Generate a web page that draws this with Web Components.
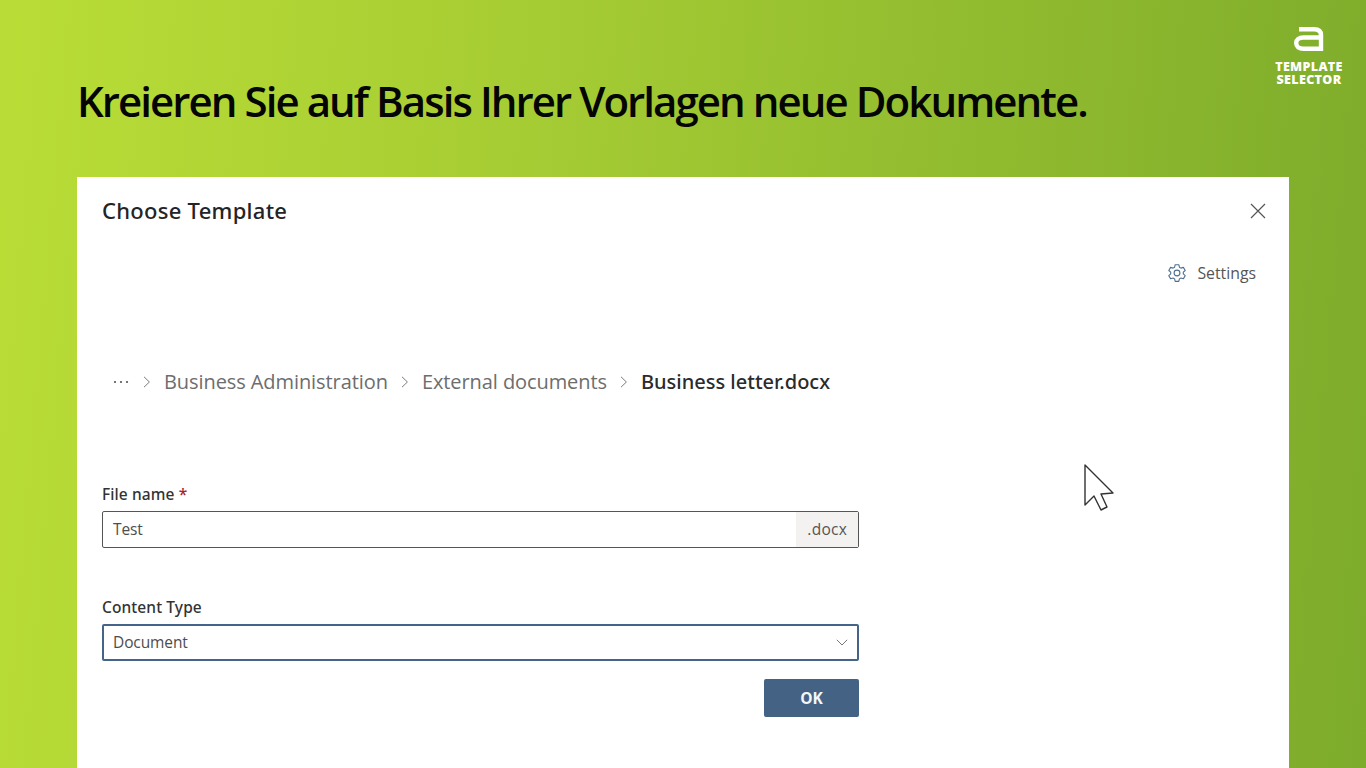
<!DOCTYPE html>
<html lang="de">
<head>
<meta charset="utf-8">
<title>Template Selector</title>
<style>
html, body { margin: 0; height: 100%; overflow: hidden; }
body { width: 1366px; height: 768px; background: linear-gradient(95deg, #badd36 0%, #a4cb33 40%, #7dab2b 100%); font-family: "Open Sans", sans-serif; }
</style>
</head>
<body>
<slide-page>
  <span slot="title">Kreieren Sie auf Basis Ihrer Vorlagen neue Dokumente.</span>
  <choose-dialog slot="dialog"></choose-dialog>
</slide-page>

<script>
class BrandLogo extends HTMLElement {
    constructor() {
        super();
        this.attachShadow({ mode: "open" });
        this.shadowRoot.innerHTML = `
<style>
:host { display: flex; flex-direction: column; align-items: center; width: 70px; color: #fff; font: 800 12.5px/13px "Open Sans", sans-serif; text-align: center; letter-spacing: .35px; }
svg { display: block; margin-bottom: 9px; }
</style>
<svg width="30" height="25" viewBox="0 0 30 25" fill="none" stroke="#fff" stroke-width="4.4">
  <path d="M5 3.2H20C25 3.2 27 5.5 27 9V22.8H9.5C4.8 22.8 2.2 20.5 2.2 17C2.2 13.5 4.8 11.5 9.5 11.5H27"/>
</svg>
<div>TEMPLATE</div>
<div>SELECTOR</div>`;
    }
}
customElements.define("brand-logo", BrandLogo);

class SlidePage extends HTMLElement {
    constructor() {
        super();
        this.attachShadow({ mode: "open" });
        this.shadowRoot.innerHTML = `
<style>
:host { display: flex; flex-direction: column; width: 1366px; height: 768px; overflow: hidden; }
header { display: flex; justify-content: space-between; align-items: flex-start; height: 177px; box-sizing: border-box; padding: 26px 22px 0 77px; }
h1 { margin: 47px 0 0; font: 600 42px/56px "Open Sans", sans-serif; letter-spacing: -1.94px; color: #050505; white-space: nowrap; }
main { flex: 1; padding: 0 77px; min-height: 0; }
</style>
<header>
  <h1><slot name="title"></slot></h1>
  <brand-logo></brand-logo>
</header>
<main><slot name="dialog"></slot></main>`;
    }
}
customElements.define("slide-page", SlidePage);

class CrumbTrail extends HTMLElement {
    constructor() {
        super();
        this.attachShadow({ mode: "open" });
        const chev = `<svg class="chev" width="8" height="12" viewBox="0 0 8 12" fill="none" stroke="#7a7a7a" stroke-width="1"><path d="M1 .8 6.4 6 1 11.2"/></svg>`;
        this.shadowRoot.innerHTML = `
<style>
:host { display: flex; align-items: center; height: 30px; padding-left: 11px; font: 400 20px/30px "Open Sans", sans-serif; letter-spacing: -.08px; color: #6d6d6d; white-space: nowrap; }
.dots { width: 17px; height: 4px; margin-right: 13px; }
.chev { margin-right: 13px; }
.part { margin-right: 13px; }
.last { color: #2b2b2b; font: 500 20px/30px "Noto Sans", sans-serif; letter-spacing: 0; }
</style>
<svg class="dots" viewBox="0 0 17 4" fill="#555"><circle cx="2" cy="2" r="1.1"/><circle cx="8" cy="2" r="1.1"/><circle cx="14" cy="2" r="1.1"/></svg>
${chev}<span class="part">Business Administration</span>
${chev}<span class="part">External documents</span>
${chev}<span class="last">Business letter.docx</span>`;
    }
}
customElements.define("crumb-trail", CrumbTrail);

class FormField extends HTMLElement {
    constructor() {
        super();
        this.attachShadow({ mode: "open" });
        this.shadowRoot.innerHTML = `
<style>
:host { display: block; width: 757px; color: #2b2b2b; }
label { display: block; font: 500 15.5px/20px "Noto Sans", sans-serif; letter-spacing: .1px; padding-top: 1px; margin-bottom: 7px; color: #333; }
.req { color: #a4262c; }
.box { display: flex; align-items: stretch; height: 37px; box-sizing: border-box; border: 1px solid #555; border-radius: 2px; font: 400 15.5px/35px "Open Sans", sans-serif; letter-spacing: -.1px; color: #4d4d4d; }
:host([focused]) .box { border: 2px solid #44648a; }
.val { flex: 1; padding-left: 10px; }
:host([focused]) .val { line-height: 33px; padding-left: 9px; }
.suffix { display: flex; align-items: center; padding: 0 11px; background: #f3f2f1; color: #555; letter-spacing: .25px; }
.caret { align-self: center; margin-right: 9px; }
</style>
<label>${this.getAttribute("label")}${this.hasAttribute("required") ? ' <span class="req">*</span>' : ""}</label>
<div class="box">
  <div class="val"><slot></slot></div>
  ${this.hasAttribute("suffix") ? `<div class="suffix">${this.getAttribute("suffix")}</div>` : ""}
  ${this.hasAttribute("dropdown") ? `<svg class="caret" width="12" height="7" viewBox="0 0 12 7" fill="none" stroke="#777" stroke-width="1"><path d="M.8.8 6 6 11.2.8"/></svg>` : ""}
</div>`;
    }
}
customElements.define("form-field", FormField);

class PrimaryButton extends HTMLElement {
    constructor() {
        super();
        this.attachShadow({ mode: "open" });
        this.shadowRoot.innerHTML = `
<style>
:host { display: flex; align-items: center; justify-content: center; width: 95px; height: 38px; background: #446384; border-radius: 2px; color: #f4f6f8; font: 700 15.5px/38px "Open Sans", sans-serif; }
</style>
<slot></slot>`;
    }
}
customElements.define("primary-button", PrimaryButton);

class ChooseDialog extends HTMLElement {
    constructor() {
        super();
        this.attachShadow({ mode: "open" });
        this.shadowRoot.innerHTML = `
<style>
:host { display: block; position: relative; background: #fff; height: 591px; box-sizing: border-box; padding: 18px 32px 0 25px; overflow: hidden; }
.top { display: flex; justify-content: space-between; align-items: center; height: 32px; }
h2 { margin: -2px 0 0; font: 500 22px/32px "Noto Sans", sans-serif; letter-spacing: .27px; color: #242424; }
.close { margin-right: -9px; }
.settings { display: flex; justify-content: flex-end; align-items: center; gap: 10px; height: 24px; margin-top: 34px; margin-right: 1px; font: 400 15.8px/24px "Open Sans", sans-serif; color: #555; }
crumb-trail { margin-top: 82px; }
form-field.first { margin-top: 86px; }
form-field.second { margin-top: 48px; }
.actions { display: flex; justify-content: flex-end; width: 757px; margin-top: 18px; }
.cursor { position: absolute; left: 1006px; top: 287px; }
</style>
<div class="top">
  <h2>Choose Template</h2>
  <svg class="close" width="16" height="16" viewBox="0 0 16 16" fill="none" stroke="#555" stroke-width="1.2"><path d="M1 1 15 15M15 1 1 15"/></svg>
</div>
<div class="settings">
  <svg width="20" height="20" viewBox="0 0 20 20" fill="none" stroke="#4f6f92" stroke-width="1.1" stroke-linejoin="round">
    <path d="M8.2 1.7h3.6l.6 2.5 1.5.9 2.5-.7 1.8 3.1-1.9 1.7v1.7l1.9 1.7-1.8 3.1-2.5-.7-1.5.9-.6 2.5H8.2l-.6-2.5-1.5-.9-2.5.7-1.8-3.1 1.9-1.7V9.2L1.8 7.5l1.8-3.1 2.5.7 1.5-.9z"/>
    <circle cx="10" cy="10" r="2.9"/>
  </svg>
  <span>Settings</span>
</div>
<crumb-trail></crumb-trail>
<form-field class="first" label="File name" required suffix=".docx">Test</form-field>
<form-field class="second" label="Content Type" dropdown focused>Document</form-field>
<div class="actions"><primary-button>OK</primary-button></div>
<svg class="cursor" width="32" height="48" viewBox="0 0 32 48" fill="#fff" stroke="#333" stroke-width="1.4" stroke-linejoin="round">
  <path d="M2 1V41L11 32L18 46L24 43L18 30L30 29Z"/>
</svg>`;
    }
}
customElements.define("choose-dialog", ChooseDialog);
</script>
</body>
</html>
